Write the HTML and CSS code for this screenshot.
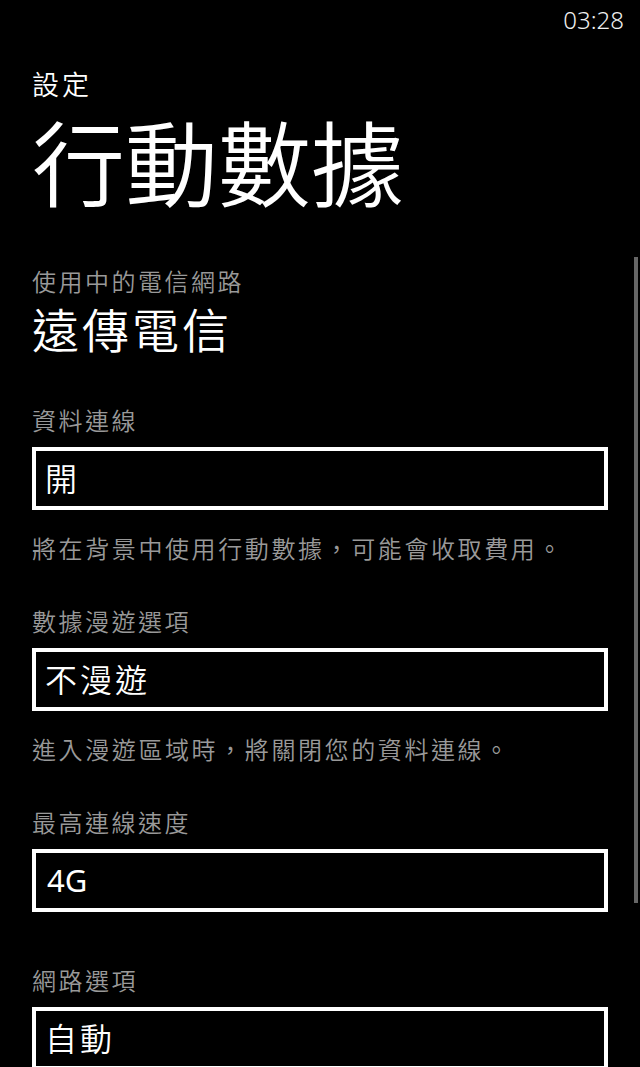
FILE: index.html
```html
<!DOCTYPE html>
<html lang="zh-Hant">
<head>
<meta charset="utf-8">
<title>行動數據</title>
<link rel="stylesheet" href="styles.css">
</head>
<body>
<div class="screen">
  <div class="statusbar"><span class="time">03:28</span></div>
  <div class="app-title">設定</div>
  <div class="page-title">行動數據</div>

  <div class="content">
    <div class="label first">使用中的電信網路</div>
    <div class="carrier">遠傳電信</div>

    <div class="setting">
      <div class="label">資料連線</div>
      <div class="picker">開</div>
      <div class="desc">將在背景中使用行動數據，可能會收取費用。</div>
    </div>

    <div class="setting">
      <div class="label">數據漫遊選項</div>
      <div class="picker">不漫遊</div>
      <div class="desc">進入漫遊區域時，將關閉您的資料連線。</div>
    </div>

    <div class="setting">
      <div class="label">最高連線速度</div>
      <div class="picker latin">4G</div>
    </div>

    <div class="setting last">
      <div class="label">網路選項</div>
      <div class="picker">自動</div>
    </div>
  </div>

  <div class="scrollbar"></div>
</div>
</body>
</html>
```

FILE: styles.css
```css
html, body {
  margin: 0;
  padding: 0;
  background: #000;
}

body {
  width: 640px;
  height: 1067px;
  overflow: hidden;
  font-family: "Noto Sans", "Noto Sans CJK TC", sans-serif;
  font-weight: 350;
  color: #fff;
}

.screen {
  position: relative;
  width: 640px;
  height: 1067px;
  overflow: hidden;
}

.statusbar {
  height: 40px;
  line-height: 40px;
  padding-right: 16px;
  text-align: right;
  font-size: 24px;
  font-weight: 300;
  color: #f0f0f0;
}

.app-title {
  margin: 31px 0 0 32px;
  font-size: 27px;
  line-height: 28px;
  letter-spacing: 3px;
}

.page-title {
  margin: 1px 0 0 32px;
  font-size: 93px;
  line-height: 128px;
  white-space: nowrap;
}

.content {
  padding: 0 32px;
}

.label {
  font-size: 24px;
  line-height: 32px;
  letter-spacing: 2.5px;
  color: #999;
  white-space: nowrap;
}

.label.first {
  margin-top: 38px;
}

.carrier {
  margin-top: 4px;
  font-size: 47px;
  line-height: 56px;
  letter-spacing: 3px;
}

.setting {
  margin-top: 47px;
}

.setting + .setting {
  margin-top: 41px;
}

.setting.last {
  margin-top: 53px;
}

.picker {
  margin-top: 10px;
  height: 55px;
  border: 4px solid #fff;
  padding-left: 9px;
  font-size: 32px;
  line-height: 55px;
  letter-spacing: 3px;
  white-space: nowrap;
}

.picker.latin {
  font-size: 31px;
  font-weight: 400;
  letter-spacing: 0;
  padding-left: 11px;
}

.desc {
  margin-top: 23px;
  font-size: 24px;
  line-height: 32px;
  letter-spacing: 2.6px;
  color: #999;
  white-space: nowrap;
}

.scrollbar {
  position: absolute;
  left: 634px;
  top: 257px;
  width: 4px;
  height: 646px;
  background: #666;
}
```
